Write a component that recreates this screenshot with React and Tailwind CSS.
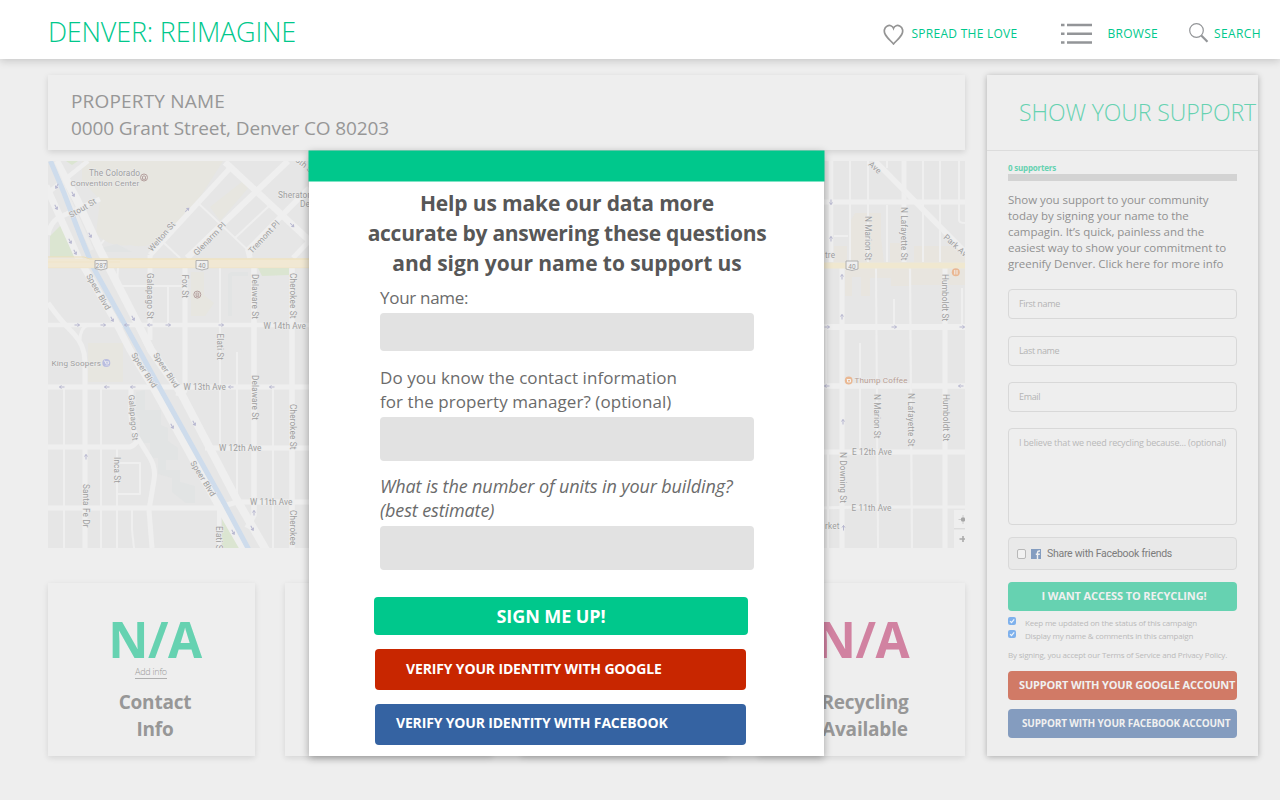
import { clsx } from 'clsx';

const roads = [
  // [path, width]
  ['M48 325H310', 4.5], ['M48 387H310', 5], ['M48 447H130Q134 446 138 440', 5], ['M205 448H310', 5],
  ['M48 508H217L237 502H310', 5], ['M185 268V390Q184 395 176 393', 5], ['M150 255V340', 5],
  ['M254 268V515L247 528', 5.5], ['M292 268V548', 5.5], ['M220 268V447', 2], ['M219 500V548', 4],
  ['M237 352V500', 2], ['M273 387V548', 2], ['M118 268L117 285L120 286H184', 2], ['M168 286V325', 2],
  ['M48 303Q60 320 73 333Q85 345 85 362V548', 5], ['M88 325Q80 328 80 340', 3],
  ['M64 387V548', 2], ['M101 387V548', 2], ['M117 447V548', 2], ['M132 508V530L134 548', 2],
  ['M118 463H140V494H118', 2], ['M131 387V415Q132 432 139 440L150 458Q156 468 154 480L149 510L152 548', 5],
  ['M225 162L312 243', 6.5], ['M150 255L231 167', 5.5], ['M187 258L288 161', 6], ['M250 258L248 250L309 188', 5.5],
  ['M293 258L312 238', 5], ['M197 202L252 254', 2], ['M235 238L270 205', 2], ['M163 242L180 258', 2],
  ['M48 193L88 161', 4.5], ['M48 235Q50 222 60 217L100 199', 5], ['M98 248L104 240', 2],
  // east side
  ['M820 202H965', 5], ['M820 327H965', 6], ['M820 386H965', 5.5], ['M820 452H965', 5], ['M820 508L860 507H965', 3],
  ['M831 161V262', 4.5], ['M850 161V262', 2], ['M868 161V262', 2], ['M887 161V168M887 205V262', 2], ['M904 161V262', 5],
  ['M923 161V262', 2], ['M940 161V262', 2], ['M959 161V220Q959 223 965 223', 2], ['M875 161L965 252', 5.5],
  ['M834 236H848', 2], ['M842 268V548', 5], ['M876 268L878 548', 2], ['M894 299V325', 2], ['M910 268L912 548', 2.2],
  ['M945 268V548', 5], ['M962 288V325', 2], ['M860 343V452', 2], ['M828 452V548', 2], ['M826 327V386', 2],
];

const labels = [
  // [text, x, y, rotation, size]
  ['The Colorado', 89, 176, 0, 8.3], ['Convention Center', 70.5, 185.5, 0, 8.1],
  ['Sheraton', 278, 198, 0, 8.3], ['De', 300, 207, 0, 8.3],
  ['Stout St', 71, 218, -30, 8.2], ['Welton St', 152, 252, -49, 8.2], ['Glenarm Pl', 197, 256, -46, 8.4],
  ['Tremont Pl', 252, 254, -47, 8.2], ['15th St', 291, 158, 38, 8.2],
  ['Galapago St', 147, 273, 90, 8.2], ['Fox St', 182, 274.5, 90, 8.2], ['Delaware St', 251.5, 274, 90, 8.2],
  ['Cherokee St', 289.5, 273, 90, 8.2], ['Speer Blvd', 86, 276, 60, 8.2], ['W 14th Ave', 263.5, 328.5, 0, 8.2],
  ['Elati St', 217, 333.5, 90, 8.2], ['King Soopers', 51.5, 365.5, 0, 8.1],
  ['Speer Blvd', 131, 355, 57, 8.2], ['Speer Blvd', 153, 355, 57, 8.2], ['W 13th Ave', 183.5, 390, 0, 8.2],
  ['Galapago St', 128.5, 395, 85, 8.2], ['Delaware St', 251.5, 375, 90, 8.2], ['Cherokee St', 289.5, 404, 90, 8.2],
  ['W 12th Ave', 219, 451, 0, 8.2], ['Inca St', 114, 457, 90, 8.2], ['Speer Blvd', 190, 463, 58, 8.2],
  ['Santa Fe Dr', 82.5, 484, 90, 8.2], ['W 11th Ave', 250, 505, 0, 8.2], ['Cherokee St', 289.5, 510, 90, 8.2],
  ['Elati St', 216, 526, 90, 8.2],
  ['Ave', 868, 165, 42, 8.2], ['N Marion St', 865, 216, 90, 8.2], ['N Lafayette St', 901, 207, 90, 8.2],
  ['Park Ave', 943, 238, 42, 8.2], ['tre', 825, 258, 0, 8.2], ['Humboldt St', 942, 274, 90, 8.2],
  ['N Marion St', 874, 394, 90, 8.2], ['N Lafayette St', 908, 393, 90, 8.2], ['Humboldt St', 942.5, 394, 90, 8.2],
  ['E 12th Ave', 852, 455, 0, 8.2], ['N Downing St', 840, 452, 90, 8.2], ['E 11th Ave', 851.5, 510.5, 0, 8.2],
  ['rket', 825, 529, 0, 8.2],
];

// one-way street arrows: [x, y, rotation]
const arrows = [
  [77, 325, 0], [103, 325, 0], [127, 325, 180], [150, 325, 180], [168, 325, 0], [221, 325, 0],
  [62, 387, 180], [107, 387, 180], [133, 387, 180], [231, 387, 180], [272, 387, 180],
  [57, 186, 120], [73, 194, 60], [56, 207, 60], [70, 241, 60], [90, 235, 60], [75, 252, 60], [187, 210, -45], [292, 225, 45],
  [112, 319, 60], [133, 318, 60], [172, 426, 60], [194, 423, 60], [233, 532, 60], [252, 528, 60], [86, 457, -90], [254, 513, -90],
  [831, 202, 90], [831, 239, -90], [842, 277, -90], [842, 317, -90], [827, 327, 0], [894, 327, 0], [962, 327, 0],
  [827, 386, 180], [961, 386, 180], [843, 422, -90], [843.5, 528, -90],
];

function CityMap() {
  return (
    <svg className="mt-[11px] block h-[387px] w-[917px]" viewBox="48 161 917 387" fontFamily="Roboto, sans-serif">
      <rect x="48" y="161" width="917" height="387" fill="#e6e6e6" />
      <g fill="#e7e6e0">
        <path d="M82 161H223L197 202L165 235Q150 250 130 245Q110 248 96 234L100 200L82 180Z" />
        <path d="M210 207L243 181L249 187L220 221Z" />
        <path d="M191 272H204V295L214 303L205 316H191Z" />
        <path d="M88 343H123V382H88Z" />
      </g>
      <g fill="#e8e5df">
        <path d="M855 213H881V238L884 262H850V222Z" />
        <path d="M834 246H847V262H834Z" />
        <path d="M890 243H904V262H890ZM914 246H958L965 256V262H914Z" />
        <path d="M845 269H965V285H909V286H891V278H870V296H861V277H852V296H845Z" />
      </g>
      <g fill="#e2e4e4">
        <path d="M136 392L145 390V410H161V425L168 428V441L178 448V460H166V470H180V482L195 486V503H186L172 492V478L158 474V458H150V443H140V420L136 414Z" />
        <path d="M231 272H248V276H232V316H228V274Z" />
        <path d="M100 248L117 244L132 252H100Z" />
      </g>
      <g fill="#dbe5d1">
        <path d="M61 225L77 257H50V236Z" />
        <path d="M66 161H78L72 165Z" />
        <path d="M258 268H289V275L262 276Z" />
        <path d="M222 515L240 548H222Z" />
      </g>
      <g fill="none" stroke="#efefef" strokeLinejoin="round">
        {roads.map(([d, w]) => <path key={d} d={d} strokeWidth={w} />)}
        <path d="M46 186L78 257L113 317L130 350L155 391L218 505L244 550" strokeWidth="7" />
        <path d="M56 161L77 200L100 250L140 328L151 350L181 393L237 500L266 550" strokeWidth="8" />
        <path d="M52 161L66 193L92 250" strokeWidth="4" stroke="#ebebeb" />
      </g>
      <path d="M50.500 161L64 193L80 235L93 267L139 350L161 390L224 503L249 550" fill="none" stroke="#cedcec" strokeWidth="5" />
      <path d="M48 258.500H310V268H48Z" fill="#f1e8d3" />
      <path d="M48 257H84L90 259H310" fill="none" stroke="#eddfb9" strokeWidth="1" />
      <path d="M48 267.700H310M48 262H120" fill="none" stroke="#efe3c6" strokeWidth=".7" />
      <path d="M820 262.500H965V268.500H820Z" fill="#f0e8d0" />
      <g fill="none" stroke="#b7b7d0" strokeWidth="1">
        {arrows.map(([x, y, r]) => (
          <path key={`${x}-${y}`} d="M-2.500 0H2.500M.5 -1.500L2.500 0L.5 1.500" transform={`translate(${x} ${y}) rotate(${r})`} />
        ))}
      </g>
      <g fill="#9e9e9e" stroke="#ececec" strokeWidth="1.200" paintOrder="stroke" letterSpacing=".15">
        {labels.map(([t, x, y, r, s]) => (
          <text key={`${t}${x}${y}`} transform={`translate(${x} ${y}) rotate(${r})`} fontSize={s}>{t}</text>
        ))}
        <text x="854.500" y="383" fontSize="8.100" fill="#b79d93">Thump Coffee</text>
      </g>
      {[[101, 265.5, '287'], [202, 265.5, '40'], [852, 266, '40']].map(([x, y, n]) => (
        <g key={x}>
          <path d={`M${x - 6} ${y - 5}H${x + 6}V${y + 3}Q${x} ${y + 6} ${x - 6} ${y + 3}Z`} fill="#efefef" stroke="#aaa" strokeWidth=".9" />
          <text x={x} y={y + 2.5} fontSize="6.500" textAnchor="middle" fill="#999">{n}</text>
        </g>
      ))}
      <g fill="none" strokeWidth="1">
        <circle cx="144" cy="177.500" r="3.500" stroke="#b5a09e" />
        <path d="M142.500 179.300V176.500L144 175.800L145.500 176.500V179.300Z" stroke="#b5a09e" />
        <circle cx="197.300" cy="294.600" r="3.500" stroke="#b5a09e" />
        <path d="M196 293H198.700V296.500H196ZM196 295H198.700" stroke="#b5a09e" strokeWidth=".8" />
        <circle cx="106.300" cy="363" r="4" fill="#b9bde0" stroke="none" />
        <path d="M104 361H105L106 364H108.300L108.800 361.800H105.300" stroke="#f2f2f2" strokeWidth=".8" />
        <path d="M105.700 365.700H106.500M107.600 365.700H108.400" stroke="#f2f2f2" strokeWidth=".8" />
        <circle cx="955.800" cy="272.200" r="4" fill="#eab893" stroke="none" />
        <path d="M954.800 270V274.500M957 270V274.500" stroke="#f2f2f2" />
        <circle cx="848.700" cy="380.500" r="3.900" fill="#eab893" stroke="none" />
        <path d="M846.800 379.500H850.500V382H847.500V379" stroke="#f2f2f2" />
      </g>
      <path d="M954 510H965V528H954ZM954 530H965V548H954Z" fill="#eee" />
      <path d="M954 528.500H965" stroke="#dcdcdc" />
      <circle cx="963" cy="519.500" r="2.200" fill="#a6a6a6" />
      <path d="M958.500 519.500H961M963 515V517M963 522V524" stroke="#c4c4c4" strokeWidth=".8" />
      <path d="M959.500 539H965M963 536V542" stroke="#aaa" strokeWidth="1.600" />
    </svg>
  );
}

function Header() {
  return (
    <header className="relative flex h-[59px] items-center justify-between bg-white pl-12 pr-[19px] text-[#00c88c] shadow-[0_2px_8px_rgba(0,0,0,0.17)]">
      <h1 className="pt-[5px] text-[27px] font-light leading-8 tracking-[-0.2px]">DENVER: REIMAGINE</h1>
      <nav className="flex items-center pt-2 text-xs leading-4 tracking-[0.27px]">
        <a className="flex items-center">
          <svg className="mr-[7px] mt-px h-[21px] w-[21px]" viewBox="0 0 21 21" fill="none" stroke="#949494" strokeWidth="1.700">
            <path d="M10.500 4.300C9.500 1.500 6.500 .9 4.300 2C1 3.700 .6 7.500 2.300 10.500C4 13.700 7.200 16.300 10.500 20C13.800 16.300 17 13.700 18.700 10.500C20.400 7.500 20 3.700 16.700 2C14.500 .9 11.500 1.500 10.500 4.300Z" />
          </svg>
          SPREAD THE LOVE
        </a>
        <a className="ml-[44px] flex items-center">
          <svg className="mr-[15px] h-[22px] w-[31px]" viewBox="0 0 31 22" stroke="#939598" strokeWidth="2.400">
            <path d="M0 2H3.500M6 2H31M0 10.700H3.500M6 10.700H31M0 19.500H3.500M6 19.500H31" />
          </svg>
          BROWSE
        </a>
        <a className="ml-[31px] flex items-center">
          <svg className="mb-[2px] mr-[5px] h-5 w-5" viewBox="0 0 20 20" fill="none" stroke="#939598">
            <circle cx="7.500" cy="7.500" r="6.800" strokeWidth="1.200" />
            <path d="M12.300 12.500L18.500 18.800" strokeWidth="2.200" />
          </svg>
          <span className="tracking-[0.4px]">SEARCH</span>
        </a>
      </nav>
    </header>
  );
}

function StatCard({ value, color, link, offset, children }) {
  return (
    <section className={clsx('flex h-[173px] w-[207px] flex-col items-center pt-[31px] shadow-[0_2px_6px_rgba(0,0,0,0.11)]', offset)}>
      <p className={clsx('text-[49.5px] font-bold leading-[50px] tracking-[-0.4px]', color)}>{value}</p>
      <div className="flex h-[25px] items-start pr-[8px]">
        {link && <a className="mt-[2px] h-[13px] border-b border-[#b0b0b0] text-[9px] font-light leading-[11px] tracking-[-0.25px] text-[#999]">{link}</a>}
      </div>
      <h3 className="text-center text-[19px] font-bold leading-[27px] tracking-[-0.2px] text-[#979797]">{children}</h3>
    </section>
  );
}

function Field({ label, className }) {
  return (
    <div className={clsx('flex h-[30px] shrink-0 items-center rounded border border-[#d8d8d8] pb-px pl-[10px] text-[9px] tracking-[-0.35px] text-[#b4b4b4]', className)}>
      {label}
    </div>
  );
}

function Check({ children }) {
  return (
    <div className="flex h-[13px] items-start text-[8px] leading-[13px] tracking-[-0.19px] text-[#bababa]">
      <span className="mr-[9px] mt-px flex h-2 w-2 rounded-[2px] bg-[#7fb1ec]">
        <svg viewBox="0 0 8 8" className="h-2 w-2" fill="none" stroke="#eef4fb" strokeWidth="1.200"><path d="M2 4.200L3.500 5.700L6.200 2.300" /></svg>
      </span>
      {children}
    </div>
  );
}

function SupportPanel() {
  return (
    <aside className="h-[681px] w-[271px] bg-[#eee] shadow-[0_1px_6px_rgba(0,0,0,0.28)]">
      <h2 className="flex h-[76px] items-center whitespace-nowrap border-b border-[#dcdcdc] pl-[32px] text-[23px] font-light tracking-[-0.08px] text-[#66d2b1]">
        SHOW YOUR SUPPORT
      </h2>
      <div className="flex flex-col pl-[21px] pr-[21px] pt-[10px]">
        <p className="text-[8px] font-bold leading-[13px] tracking-[-0.2px] text-[#66d2b1]">0 supporters</p>
        <div className="h-[7px] bg-[#d3d3d3]" />
        <p className="mt-[11px] whitespace-nowrap text-[11.5px] leading-4 tracking-[-0.05px] text-[#919191]">
          Show you support to your community<br />
          today by signing your name to the<br />
          campagin. It’s quick, painless and the<br />
          easiest way to show your commitment to<br />
          greenify Denver. Click here for more info
        </p>
        <Field label="First name" className="mt-[17px]" />
        <Field label="Last name" className="mt-[17px]" />
        <Field label="Email" className="mt-4" />
        <div className="mt-4 h-[97px] whitespace-nowrap rounded border border-[#d8d8d8] pl-[10px] pt-[7px] text-[9px] leading-[13px] tracking-[-0.19px] text-[#b9b9b9]">
          I believe that we need recycling because... (optional)
        </div>
        <div className="mt-3 flex h-[33px] items-center rounded border border-[#d9d9d9] bg-[#e9e9e9] pl-2 font-['Roboto',sans-serif] text-[10.5px] tracking-[-0.27px] text-[#7c7c7c]">
          <span className="mr-[5px] h-[10px] w-[9px] rounded-[2px] border border-[#b8b8b8] bg-[#f1f1f1]" />
          <svg viewBox="0 0 10 10" className="mr-[6px] mt-px h-[10px] w-[10px]">
            <path d="M0 0H10V10H0Z" fill="#849dc0" />
            <path d="M6.500 10V3.500Q6.500 2 8.300 2H9M4.800 5.300H8.800" fill="none" stroke="#f0f0f0" strokeWidth="1.400" />
          </svg>
          Share with Facebook friends
        </div>
        <button className="mt-3 h-[29px] rounded bg-[#66d2b1] pl-[3px] text-[11px] font-bold tracking-[-0.1px] text-[#f0f0f0]">
          I WANT ACCESS TO RECYCLING!
        </button>
        <div className="mt-[5px]">
          <Check>Keep me updated on the status of this campaign</Check>
          <Check>Display my name &amp; comments in this campaign</Check>
        </div>
        <p className="mt-[6px] whitespace-nowrap text-[8px] leading-[13px] tracking-[-0.19px] text-[#bababa]">
          By signing, you accept our Terms of Service and Privacy Policy.
        </p>
        <button className="mt-[10px] h-[29px] whitespace-nowrap rounded bg-[#d17a66] pl-[11px] text-left text-[11px] font-bold tracking-[-0.18px] text-[#f0f0f0]">
          SUPPORT WITH YOUR GOOGLE ACCOUNT
        </button>
        <button className="mt-[9px] h-[29px] whitespace-nowrap rounded bg-[#849cbf] pl-[14px] text-left text-[10px] font-bold tracking-[-0.16px] text-[#f0f0f0]">
          SUPPORT WITH YOUR FACEBOOK ACCOUNT
        </button>
      </div>
    </aside>
  );
}

function Modal() {
  return (
    <div role="dialog" className="absolute left-[309px] top-[151px] flex h-[605px] w-[515px] flex-col bg-white shadow-[0_2px_8px_rgba(0,0,0,0.33)]">
      <div className="h-[30px] shrink-0 bg-[#00c88c] shadow-[0_0_0_0.5px_#00c88c]" />
      <h2 className="mt-[7px] flex flex-col items-center whitespace-nowrap pl-[1px] text-[21px] font-bold leading-[30px] text-[#575757]">
        <span className="tracking-[-0.15px]">Help us make our data more</span>
        <span className="tracking-[-0.27px]">accurate by answering these questions</span>
        <span className="tracking-[-0.07px]">and sign your name to support us</span>
      </h2>
      <div className="mt-2 flex w-[444.500px] flex-col pl-[71px] text-[17px] leading-6 tracking-[0.06px] text-[#6b6b6b]">
        <label className="tracking-[-0.3px]">Your name:</label>
        <div className="mt-[3px] h-[37.5px] rounded bg-[#e2e2e2]" />
        <label className="mt-[15px]">Do you know the contact information<br />for the property manager? (optional)</label>
        <div className="mt-[3.5px] h-[44px] rounded bg-[#e2e2e2]" />
        <label className="mt-[13px] whitespace-nowrap text-[18px] italic tracking-[-0.11px]">What is the number of units in your building?<br />(best estimate)</label>
        <div className="mt-1 h-[43.5px] rounded bg-[#e2e2e2]" />
      </div>
      <div className="mt-[27px] flex flex-col px-[66px] font-bold text-white">
        <button className="-ml-px h-[38px] w-[374px] rounded bg-[#00c88c] pr-5 pt-[2px] text-[18px] tracking-[-0.1px]">
          SIGN ME UP!
        </button>
        <button className="mt-[14px] h-[41px] w-[371px] rounded bg-[#c82600] pb-[2px] pl-[31px] text-left text-[14px] tracking-[-0.15px]">
          VERIFY YOUR IDENTITY WITH GOOGLE
        </button>
        <button className="mt-[14px] h-[41px] w-[371px] rounded bg-[#3563a2] pb-[3px] pl-[21px] text-left text-[14px] tracking-[-0.17px]">
          VERIFY YOUR IDENTITY WITH FACEBOOK
        </button>
      </div>
    </div>
  );
}

export default function App() {
  return (
    <div className="relative h-[800px] w-[1280px] overflow-hidden bg-[#eee] font-['Open_Sans','Noto_Sans',sans-serif]">
      <Header />
      <div className="flex pl-12 pt-4">
        <main className="w-[917px]">
          <section className="h-[75px] pl-[23px] pt-[13px] text-[19px] leading-[27px] text-[#979797] shadow-[0_2px_6px_rgba(0,0,0,0.13)]">
            <p className="tracking-[0.18px]">PROPERTY NAME</p>
            <p className="tracking-[-0.11px]">0000 Grant Street, Denver CO 80203</p>
          </section>
          <CityMap />
          <div className="mt-[35px] flex justify-between">
            <StatCard value="N/A" color="text-[#66d2b1]" link="Add info" offset="pl-[7px]">Contact<br />Info</StatCard>
            <StatCard />
            <StatCard />
            <StatCard value="N/A" color="text-[#d182a1] -ml-[5px]" offset="pl-[7px]">Recycling<br />Available</StatCard>
          </div>
        </main>
        <div className="pl-[22px]">
          <SupportPanel />
        </div>
      </div>
      <Modal />
    </div>
  );
}
